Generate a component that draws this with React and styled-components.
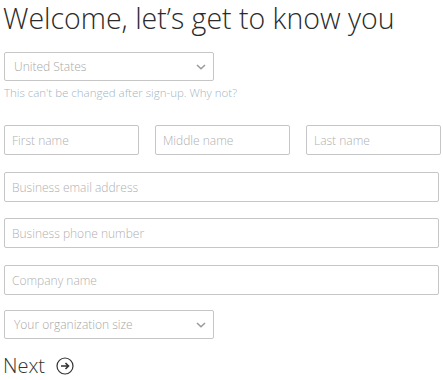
import React from 'react';
import styled, { createGlobalStyle } from 'styled-components';

const GlobalStyle = createGlobalStyle`
  html, body {
    margin: 0;
    padding: 0;
    background: #fff;
  }
  body {
    font-family: "Open Sans", "Noto Sans", sans-serif;
  }
`;

const Page = styled.div`
  width: 443px;
  min-height: 380px;
  padding: 1px 4px 0;
  box-sizing: border-box;
  display: flex;
  flex-direction: column;
`;

const Title = styled.h1`
  margin: 0;
  margin-left: -1px;
  font-weight: 300;
  font-size: 28.5px;
  line-height: 34px;
  color: #2b2b2b;
  white-space: nowrap;
`;

const SelectBox = styled.div`
  width: 210px;
  height: 29px;
  box-sizing: border-box;
  border: 1px solid #c6c6c6;
  border-radius: 2px;
  display: flex;
  align-items: center;
  justify-content: space-between;
  padding: 0 6px 0 9px;
  margin-top: ${(p) => p.$top || 0}px;
  font-size: 12px;
  font-weight: 300;
  color: #a8a8a8;
`;

const Hint = styled.div`
  margin-top: 4px;
  font-size: 11.5px;
  line-height: 16px;
  font-weight: 300;
  color: #9fb6c4;
  white-space: nowrap;
`;

const Row = styled.div`
  display: grid;
  grid-template-columns: repeat(3, 135px);
  column-gap: 16px;
  margin-top: ${(p) => p.$top || 0}px;
`;

const Field = styled.div`
  height: 30px;
  box-sizing: border-box;
  border: 1px solid #c6c6c6;
  border-radius: 2px;
  display: flex;
  align-items: center;
  padding: 0 7px;
  margin-top: ${(p) => p.$top || 0}px;
  font-size: 12px;
  font-weight: 300;
  color: #b0b0b0;
  white-space: nowrap;
`;

const NextButton = styled.div`
  margin-top: 13px;
  display: flex;
  align-items: center;
  gap: 11px;
  font-size: 20px;
  font-weight: 300;
  color: #333;
  margin-left: -1px;
`;

const Chevron = () => (
  <svg width="12" height="8" viewBox="0 0 12 8">
    <path d="M2 2 L6 5.8 L10 2" fill="none" stroke="#9a9a9a" strokeWidth="1.5" />
  </svg>
);

const ArrowCircle = () => (
  <svg width="18" height="18" viewBox="0 0 18 18">
    <circle cx="9" cy="9" r="8" fill="none" stroke="#333" strokeWidth="1.2" />
    <path d="M5 9 H12.5 M9.5 6 L12.5 9 L9.5 12" fill="none" stroke="#333" strokeWidth="1.6" />
  </svg>
);

export default function App() {
  return (
    <Page>
      <GlobalStyle />
      <Title>Welcome, let’s get to know you</Title>
      <SelectBox $top={17}>
        <span>United States</span>
        <Chevron />
      </SelectBox>
      <Hint>This can't be changed after sign-up. Why not?</Hint>
      <Row $top={24}>
        <Field>First name</Field>
        <Field>Middle name</Field>
        <Field>Last name</Field>
      </Row>
      <Field $top={17}>Business email address</Field>
      <Field $top={16}>Business phone number</Field>
      <Field $top={17}>Company name</Field>
      <SelectBox $top={15}>
        <span>Your organization size</span>
        <Chevron />
      </SelectBox>
      <NextButton>
        <span>Next</span>
        <ArrowCircle />
      </NextButton>
    </Page>
  );
}
